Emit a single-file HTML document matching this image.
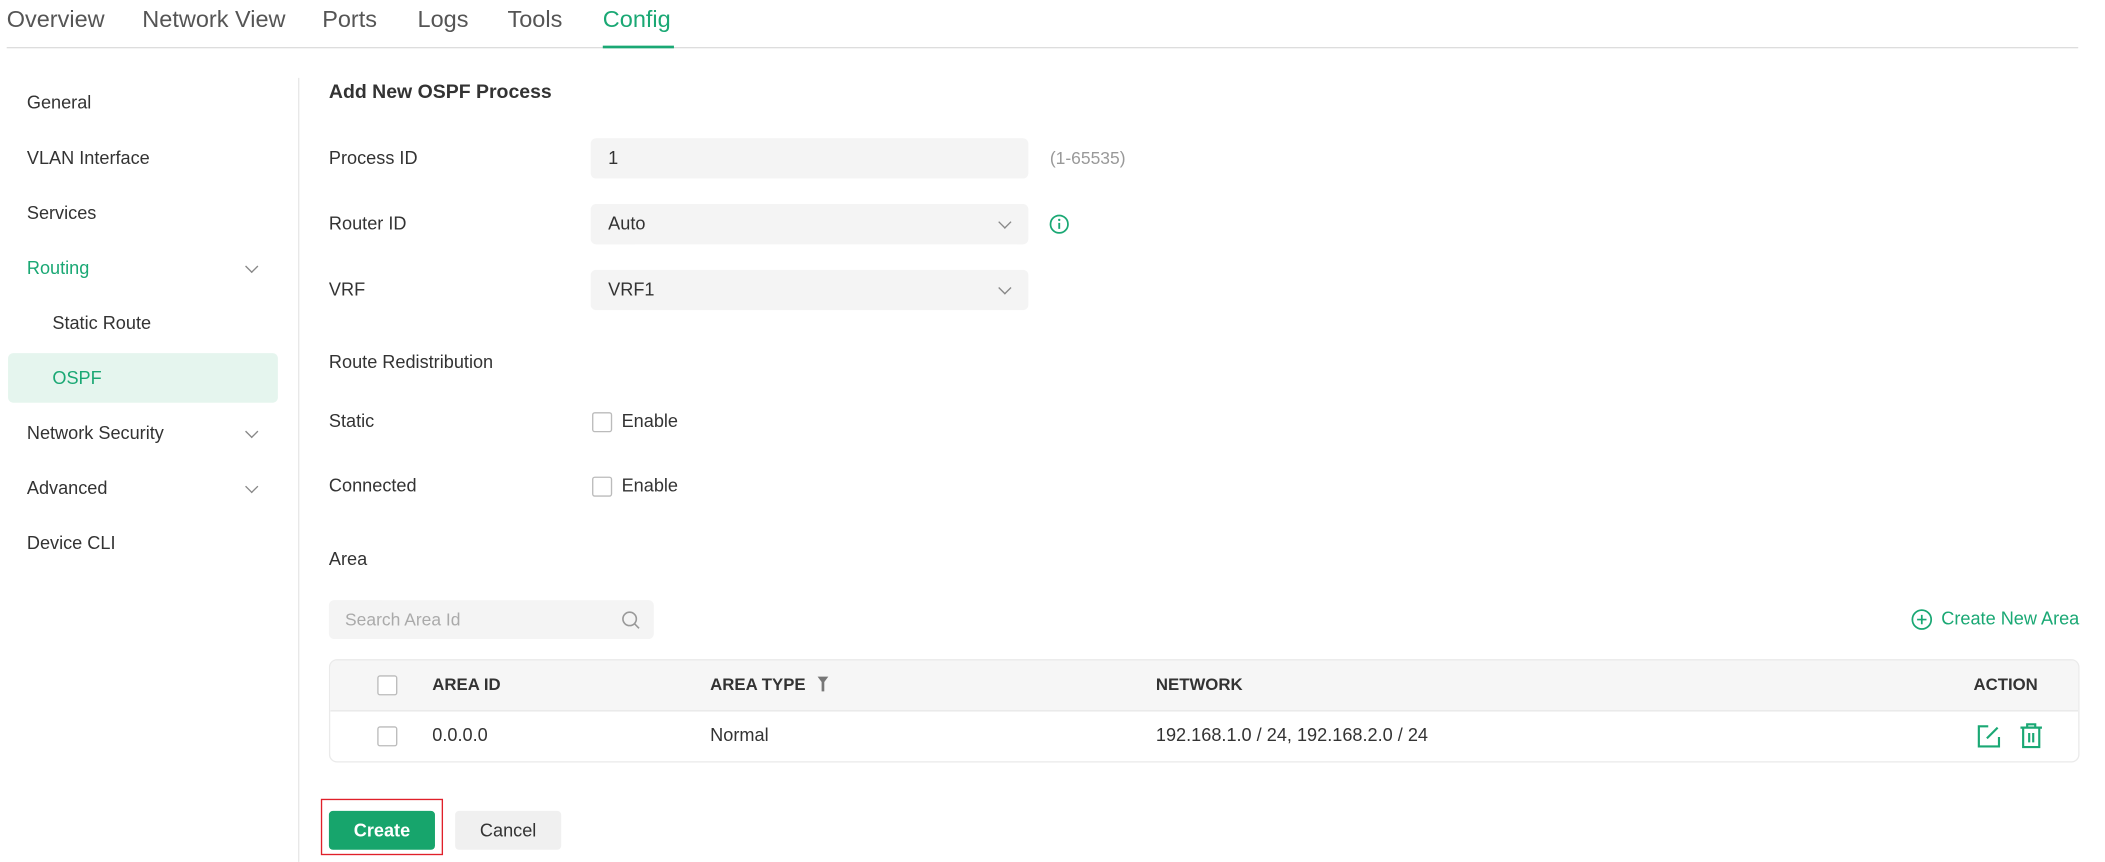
<!DOCTYPE html>
<html><head><meta charset="utf-8"><style>
html,body{margin:0;padding:0;background:#fff;overflow:hidden}
body{width:2105px;height:861px}
#w{position:absolute;left:0;top:0;width:1570px;height:642px;transform:scale(1.3425);transform-origin:0 0;font-family:"Liberation Sans",sans-serif;color:#333}
.a{position:absolute;white-space:nowrap}
.t{font-size:17.5px;color:#555;top:4px}
.s{font-size:13.5px;color:#333}
.l{font-size:13.5px;color:#333}
.in{position:absolute;left:440px;width:326px;height:30px;background:#f4f4f4;border-radius:4px}
.in span{position:absolute;left:13px;top:7px;font-size:13.5px;color:#333}
.chev{position:absolute;width:6px;height:6px;border-right:1px solid #888;border-bottom:1px solid #888;transform:rotate(45deg)}
.cb{position:absolute;width:13px;height:13px;border:1px solid #bbb;border-radius:2px;background:#fff}
.g{color:#1aa874}
.th{font-size:12.5px;font-weight:bold;color:#333}
</style></head><body><div id="w">
<div class="a t" style="left:5px">Overview</div>
<div class="a t" style="left:106px">Network View</div>
<div class="a t" style="left:240px">Ports</div>
<div class="a t" style="left:311px">Logs</div>
<div class="a t" style="left:378px">Tools</div>
<div class="a t g" style="left:449px">Config</div>
<div class="a" style="left:5px;top:35px;width:1543px;height:1px;background:#ddd"></div>
<div class="a" style="left:449px;top:34px;width:53px;height:2px;background:#1aa874"></div>

<div class="a" style="left:6px;top:263px;width:201px;height:37px;background:#e5f5ee;border-radius:4px"></div>
<div class="a s" style="left:20px;top:69px">General</div>
<div class="a s" style="left:20px;top:110px">VLAN Interface</div>
<div class="a s" style="left:20px;top:151px">Services</div>
<div class="a s g" style="left:20px;top:192px">Routing</div>
<div class="a s" style="left:39px;top:233px">Static Route</div>
<div class="a s g" style="left:39px;top:274px">OSPF</div>
<div class="a s" style="left:20px;top:315px">Network Security</div>
<div class="a s" style="left:20px;top:356px">Advanced</div>
<div class="a s" style="left:20px;top:397px">Device CLI</div>
<div class="chev" style="left:184px;top:195px"></div>
<div class="chev" style="left:184px;top:318px"></div>
<div class="chev" style="left:184px;top:359px"></div>
<div class="a" style="left:222px;top:58px;width:1px;height:584px;background:#e8e8e8"></div>

<div class="a" style="left:245px;top:61px;font-size:14.5px;font-weight:bold;color:#333">Add New OSPF Process</div>
<div class="a l" style="left:245px;top:110px">Process ID</div>
<div class="in" style="top:103px"><span>1</span></div>
<div class="a" style="left:782px;top:110px;font-size:13px;color:#999">(1-65535)</div>
<div class="a l" style="left:245px;top:159px">Router ID</div>
<div class="in" style="top:152px"><span>Auto</span><div class="chev" style="left:305px;top:10px"></div></div>
<svg class="a" style="left:781px;top:159px" width="16" height="16" viewBox="0 0 16 16"><circle cx="8" cy="8" r="6.5" fill="none" stroke="#1aa874" stroke-width="1.3"/><line x1="8" y1="7" x2="8" y2="11.5" stroke="#1aa874" stroke-width="1.4"/><circle cx="8" cy="4.8" r=".9" fill="#1aa874"/></svg>
<div class="a l" style="left:245px;top:208px">VRF</div>
<div class="in" style="top:201px"><span>VRF1</span><div class="chev" style="left:305px;top:10px"></div></div>
<div class="a l" style="left:245px;top:262px">Route Redistribution</div>
<div class="a l" style="left:245px;top:306px">Static</div>
<div class="cb" style="left:441px;top:307px"></div>
<div class="a l" style="left:463px;top:306px">Enable</div>
<div class="a l" style="left:245px;top:354px">Connected</div>
<div class="cb" style="left:441px;top:355px"></div>
<div class="a l" style="left:463px;top:354px">Enable</div>
<div class="a l" style="left:245px;top:409px">Area</div>

<div class="a" style="left:245px;top:447px;width:242px;height:29px;background:#f4f4f4;border-radius:4px"></div>
<div class="a" style="left:257px;top:454px;font-size:13px;color:#aaa">Search Area Id</div>
<svg class="a" style="left:462px;top:454px" width="16" height="16" viewBox="0 0 16 16"><circle cx="7" cy="7" r="5" fill="none" stroke="#999" stroke-width="1.2"/><line x1="10.6" y1="10.6" x2="14" y2="14" stroke="#999" stroke-width="1.2"/></svg>
<svg class="a" style="left:1423px;top:453px" width="17" height="17" viewBox="0 0 17 17"><circle cx="8.5" cy="8.5" r="7" fill="none" stroke="#1aa874" stroke-width="1.3"/><path d="M8.5 5v7M5 8.5h7" stroke="#1aa874" stroke-width="1.3"/></svg>
<div class="a g" style="left:1446px;top:453px;font-size:13.5px">Create New Area</div>

<div class="a" style="left:245px;top:491px;width:1302px;height:75px;border:1px solid #eaeaea;border-radius:6px;overflow:hidden">
<div style="position:absolute;left:0;top:0;width:100%;height:37px;background:#f6f6f6;border-bottom:1px solid #e8e8e8"></div>
</div>
<div class="cb" style="left:281px;top:503px"></div>
<div class="a th" style="left:322px;top:503px">AREA ID</div>
<div class="a th" style="left:529px;top:503px">AREA TYPE</div>
<svg class="a" style="left:608px;top:503px" width="10" height="13" viewBox="0 0 10 13"><path d="M1 1h8L6 5v7H4V5z" fill="#777"/></svg>
<div class="a th" style="left:861px;top:503px">NETWORK</div>
<div class="a th" style="left:1470px;top:503px">ACTION</div>
<div class="cb" style="left:281px;top:541px"></div>
<div class="a l" style="left:322px;top:540px">0.0.0.0</div>
<div class="a l" style="left:529px;top:540px">Normal</div>
<div class="a l" style="left:861px;top:540px">192.168.1.0 / 24, 192.168.2.0 / 24</div>
<svg class="a" style="left:1472px;top:539px" width="19" height="19" viewBox="0 0 19 19"><path d="M9 2H2v15h15v-7" fill="none" stroke="#1aa874" stroke-width="1.6"/><path d="M8 11l8-8" stroke="#1aa874" stroke-width="1.6"/></svg>
<svg class="a" style="left:1504px;top:538px" width="18" height="20" viewBox="0 0 18 20"><path d="M1 4h16M6 4V1.5h6V4M3 4v14.5h12V4M7.5 8v7M10.5 8v7" fill="none" stroke="#1aa874" stroke-width="1.6"/></svg>

<div class="a" style="left:239px;top:595px;width:89px;height:40px;border:1.5px solid #e0202a"></div>
<div class="a" style="left:245px;top:604px;width:79px;height:29px;background:#17a56c;border-radius:3px;color:#fff;font-size:13.5px;text-align:center;line-height:29px;font-weight:bold">Create</div>
<div class="a" style="left:339px;top:604px;width:79px;height:29px;background:#f0f0f0;border-radius:3px;color:#333;font-size:13.5px;text-align:center;line-height:29px">Cancel</div>
</div></body></html>
